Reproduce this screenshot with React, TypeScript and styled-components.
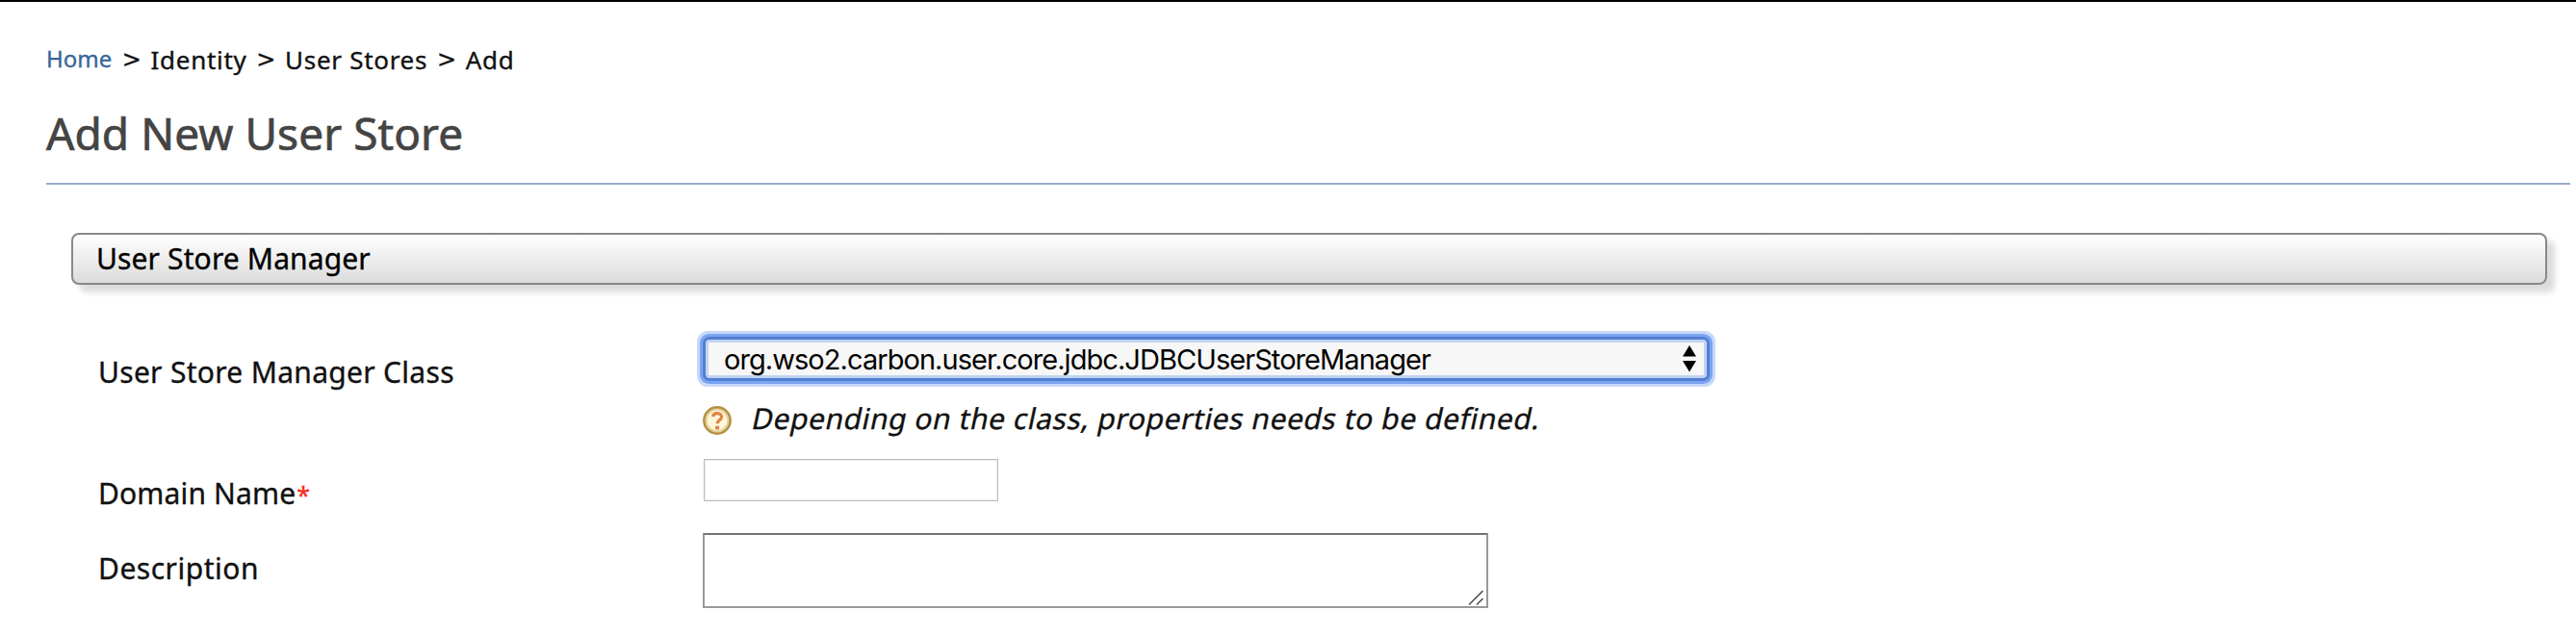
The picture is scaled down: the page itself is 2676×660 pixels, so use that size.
import React from "react";
import styled, { createGlobalStyle } from "styled-components";

const GlobalStyle = createGlobalStyle`
  * { box-sizing: border-box; }
  body {
    margin: 0;
    background: #fff;
    color: #111;
    font-family: "Noto Sans", "Open Sans", sans-serif;
    -webkit-text-stroke: 0.35px currentColor;
  }
`;

const Page = styled.main`
  height: 660px;
  overflow: hidden;
  border-top: 2px solid #000;
  padding: 40px 6px 0 48px;
`;

const Breadcrumb = styled.nav`
  display: flex;
  align-items: flex-start;
  height: 40px;
  font-size: 26px;
  line-height: 40px;
  white-space: nowrap;
`;

const HomeLink = styled.a`
  width: 69px;
  font-size: 24px;
  line-height: 38px;
  color: #386698;
  text-decoration: none;
`;

const Crumb = styled.span`
  letter-spacing: 0.7px;
`;

const Separator = styled.span`
  width: 39.6px;
  text-align: center;
  font-family: "DejaVu Sans", sans-serif;
  font-size: 24px;
`;

const Title = styled.h1`
  margin: 26px 0 0;
  padding-bottom: 22px;
  border-bottom: 2px solid #9aabcb;
  font-size: 46px;
  font-weight: 400;
  line-height: 60px;
  letter-spacing: 0.05px;
  color: #444;
  -webkit-text-stroke-width: 0.7px;
`;

const SectionBar = styled.h2`
  display: flex;
  align-items: center;
  height: 54px;
  margin: 50px 24px 48px 26px;
  padding-left: 24px;
  border: 2px solid #888;
  border-radius: 8px;
  background: linear-gradient(#fff, #dcdcdc);
  box-shadow: 8px 8px 6px #dcdcdc;
  font-size: 30px;
  font-weight: 400;
  line-height: 40px;
  letter-spacing: 0.13px;
  color: #000;
`;

const Form = styled.form`
  padding-left: 54px;
`;

const Row = styled.div<{ $height: number; $gap?: number }>`
  display: grid;
  grid-template-columns: 628px 1fr;
  height: ${(p) => p.$height}px;
  margin-bottom: ${(p) => p.$gap ?? 0}px;
`;

const Label = styled.label<{ $offset: number; $tracking: number }>`
  padding-top: ${(p) => p.$offset}px;
  font-size: 30px;
  line-height: 40px;
  letter-spacing: ${(p) => p.$tracking}px;
`;

const Required = styled.span`
  color: #f22c1e;
  font-size: 25px;
  margin-left: 1px;
`;

const SelectBox = styled.div`
  display: flex;
  align-items: center;
  justify-content: space-between;
  width: 1040px;
  height: 40px;
  margin: 9px 0 0 3px;
  padding: 0 8px 0 16px;
  border: 3px solid #c1d4f3;
  border-radius: 4px;
  background: #f7f7f7;
  box-shadow: 0 0 0 3px #537fd3, 0 0 0 6px #7aa3f1, 0 0 0 9px #c6d9f9;
  font-family: Inter, "Liberation Sans", sans-serif;
  font-size: 29px;
  line-height: 34px;
  letter-spacing: -0.94px;
  color: #000;
  -webkit-text-stroke-width: 0;
`;

const SelectValue = styled.span`
  padding-top: 1px;
`;

const Hint = styled.div`
  display: flex;
  align-items: flex-start;
  margin-top: 21px;
`;

const HelpIcon = styled.svg`
  width: 30px;
  height: 30px;
  margin: 8px 22px 0 0;
`;

const HintText = styled.span`
  padding-top: 1px;
  font-size: 30px;
  line-height: 40px;
  letter-spacing: 0.56px;
  white-space: nowrap;
  transform: skewX(-12deg);
`;

const TextInput = styled.input`
  width: 306px;
  height: 44px;
  margin-left: 1px;
  border: 1px solid #bbb;
  box-shadow: inset 0 0 0 1px #eee;
  background: #fff;
  outline: none;
`;

const TextArea = styled.div`
  display: flex;
  align-items: flex-end;
  justify-content: flex-end;
  width: 816px;
  height: 78px;
  padding: 0 3px 1px 0;
  border: 2px solid #999;
  border-top-color: #737373;
`;

export default function App() {
  return (
    <>
      <GlobalStyle />
      <Page>
        <Breadcrumb>
          <HomeLink href="#">Home</HomeLink>
          <Separator>&gt;</Separator>
          <Crumb>Identity</Crumb>
          <Separator>&gt;</Separator>
          <Crumb>User Stores</Crumb>
          <Separator>&gt;</Separator>
          <Crumb>Add</Crumb>
        </Breadcrumb>
        <Title>Add New User Store</Title>
        <SectionBar>User Store Manager</SectionBar>
        <Form>
          <Row $height={110} $gap={23}>
            <Label $offset={23} $tracking={0.3}>User Store Manager Class</Label>
            <div>
              <SelectBox>
                <SelectValue>org.wso2.carbon.user.core.jdbc.JDBCUserStoreManager</SelectValue>
                <svg width="14" height="28" viewBox="0 0 14 28">
                  <path d="M7 0 14 11.5H0ZM0 16H14L7 27.5Z" fill="#000" />
                </svg>
              </SelectBox>
              <Hint>
                <HelpIcon viewBox="0 0 30 30">
                  <circle cx="15" cy="15" r="13.5" fill="#fdf6d9" stroke="#b39044" strokeWidth="2.8" />
                  <circle cx="15" cy="15" r="11.4" fill="none" stroke="#e6d29a" strokeWidth="2" />
                  <path
                    d="M10.6 11.2C10.8 8.7 12.5 7.6 15 7.6s4.6 1.3 4.6 3.7c0 3.2-4.3 3.4-4.3 7"
                    fill="none"
                    stroke="#df8544"
                    strokeWidth="3.2"
                  />
                  <rect x="13" y="20.8" width="4.2" height="3.8" rx="1" fill="#df8544" />
                </HelpIcon>
                <HintText>Depending on the class, properties needs to be defined.</HintText>
              </Hint>
            </div>
          </Row>
          <Row $height={44} $gap={33}>
            <Label $offset={16} $tracking={0.15}>
              Domain Name<Required>*</Required>
            </Label>
            <TextInput />
          </Row>
          <Row $height={78}>
            <Label $offset={17} $tracking={0.5}>Description</Label>
            <TextArea>
              <svg width="16" height="16" viewBox="0 0 16 16">
                <path d="M1 15.5 15.5 1M9 15.5 15.5 9" stroke="#555" strokeWidth="1.6" fill="none" />
              </svg>
            </TextArea>
          </Row>
        </Form>
      </Page>
    </>
  );
}
